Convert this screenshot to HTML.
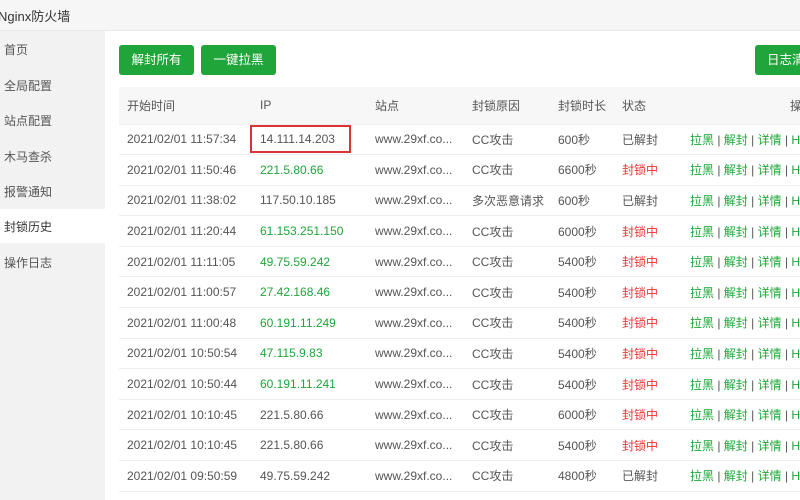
<!DOCTYPE html>
<html><head><meta charset="utf-8"><style>
*{margin:0;padding:0;box-sizing:border-box}
body{width:800px;height:500px;overflow:hidden;background:#fff;font-family:"Liberation Sans","Noto Sans CJK SC",sans-serif;font-size:12px;color:#555;position:relative}
.top{position:absolute;left:0;top:0;width:800px;height:31px;background:#f6f6f6;border-bottom:1px solid #e8e8e8}
.top span{position:absolute;left:-2px;top:6px;font-size:13px;color:#333}
.side{position:absolute;left:0;top:31px;width:105px;height:469px;background:#f2f2f2}
.side div{position:absolute;left:4px;font-size:12px;color:#555}
.side div.sel{position:absolute;left:0;top:178px;width:105px;height:34px;background:#fff}
.btn{position:absolute;top:45px;height:30px;background:#20a53a;color:#fff;border-radius:3px;font-size:12.5px;line-height:30px;text-align:center}
table{position:absolute;left:119px;top:87px;width:700px;border-collapse:collapse}
td{height:30.6px;border-bottom:1px solid #eee;white-space:nowrap;padding-left:8px;color:#555}
tr.h td{height:37px;background:#f7f7f7;color:#555}
.g{color:#20a53a}.r{color:#e33}
.box{position:absolute;left:250px;top:125px;width:101px;height:28px;border:2px solid #d33}
</style></head><body>
<div class="top"><span>Nginx防火墙</span></div>
<div class="side"><div class="sel"></div>
<div style="top:10px">首页</div><div style="top:46px">全局配置</div><div style="top:81px">站点配置</div><div style="top:117px">木马查杀</div><div style="top:152px">报警通知</div><div style="top:187px;color:#333">封锁历史</div><div style="top:223px">操作日志</div></div>
<div class="btn" style="left:119px;width:75px">解封所有</div>
<div class="btn" style="left:201px;width:75px">一键拉黑</div>
<div class="btn" style="left:755px;width:60px;text-align:left;padding-left:12px">日志清</div>
<table>
<colgroup><col style="width:133px"><col style="width:115px"><col style="width:97px"><col style="width:86px"><col style="width:64px"><col style="width:68px"><col></colgroup>
<tr class="h"><td>开始时间</td><td>IP</td><td>站点</td><td>封锁原因</td><td>封锁时长</td><td>状态</td><td style="padding-left:108px">操作</td></tr>
<tr><td>2021/02/01 11:57:34</td><td>14.111.14.203</td><td>www.29xf.co...</td><td>CC攻击</td><td>600秒</td><td>已解封</td><td class="g">拉黑 <span style="color:#555">|</span> 解封 <span style="color:#555">|</span> 详情 <span style="color:#555">|</span> H</td></tr>
<tr><td>2021/02/01 11:50:46</td><td class="g">221.5.80.66</td><td>www.29xf.co...</td><td>CC攻击</td><td>6600秒</td><td class="r">封锁中</td><td class="g">拉黑 <span style="color:#555">|</span> 解封 <span style="color:#555">|</span> 详情 <span style="color:#555">|</span> H</td></tr>
<tr><td>2021/02/01 11:38:02</td><td>117.50.10.185</td><td>www.29xf.co...</td><td>多次恶意请求</td><td>600秒</td><td>已解封</td><td class="g">拉黑 <span style="color:#555">|</span> 解封 <span style="color:#555">|</span> 详情 <span style="color:#555">|</span> H</td></tr>
<tr><td>2021/02/01 11:20:44</td><td class="g">61.153.251.150</td><td>www.29xf.co...</td><td>CC攻击</td><td>6000秒</td><td class="r">封锁中</td><td class="g">拉黑 <span style="color:#555">|</span> 解封 <span style="color:#555">|</span> 详情 <span style="color:#555">|</span> H</td></tr>
<tr><td>2021/02/01 11:11:05</td><td class="g">49.75.59.242</td><td>www.29xf.co...</td><td>CC攻击</td><td>5400秒</td><td class="r">封锁中</td><td class="g">拉黑 <span style="color:#555">|</span> 解封 <span style="color:#555">|</span> 详情 <span style="color:#555">|</span> H</td></tr>
<tr><td>2021/02/01 11:00:57</td><td class="g">27.42.168.46</td><td>www.29xf.co...</td><td>CC攻击</td><td>5400秒</td><td class="r">封锁中</td><td class="g">拉黑 <span style="color:#555">|</span> 解封 <span style="color:#555">|</span> 详情 <span style="color:#555">|</span> H</td></tr>
<tr><td>2021/02/01 11:00:48</td><td class="g">60.191.11.249</td><td>www.29xf.co...</td><td>CC攻击</td><td>5400秒</td><td class="r">封锁中</td><td class="g">拉黑 <span style="color:#555">|</span> 解封 <span style="color:#555">|</span> 详情 <span style="color:#555">|</span> H</td></tr>
<tr><td>2021/02/01 10:50:54</td><td class="g">47.115.9.83</td><td>www.29xf.co...</td><td>CC攻击</td><td>5400秒</td><td class="r">封锁中</td><td class="g">拉黑 <span style="color:#555">|</span> 解封 <span style="color:#555">|</span> 详情 <span style="color:#555">|</span> H</td></tr>
<tr><td>2021/02/01 10:50:44</td><td class="g">60.191.11.241</td><td>www.29xf.co...</td><td>CC攻击</td><td>5400秒</td><td class="r">封锁中</td><td class="g">拉黑 <span style="color:#555">|</span> 解封 <span style="color:#555">|</span> 详情 <span style="color:#555">|</span> H</td></tr>
<tr><td>2021/02/01 10:10:45</td><td>221.5.80.66</td><td>www.29xf.co...</td><td>CC攻击</td><td>6000秒</td><td class="r">封锁中</td><td class="g">拉黑 <span style="color:#555">|</span> 解封 <span style="color:#555">|</span> 详情 <span style="color:#555">|</span> H</td></tr>
<tr><td>2021/02/01 10:10:45</td><td>221.5.80.66</td><td>www.29xf.co...</td><td>CC攻击</td><td>5400秒</td><td class="r">封锁中</td><td class="g">拉黑 <span style="color:#555">|</span> 解封 <span style="color:#555">|</span> 详情 <span style="color:#555">|</span> H</td></tr>
<tr><td>2021/02/01 09:50:59</td><td>49.75.59.242</td><td>www.29xf.co...</td><td>CC攻击</td><td>4800秒</td><td>已解封</td><td class="g">拉黑 <span style="color:#555">|</span> 解封 <span style="color:#555">|</span> 详情 <span style="color:#555">|</span> H</td></tr>
</table>
<div class="box"></div>
</body></html>
